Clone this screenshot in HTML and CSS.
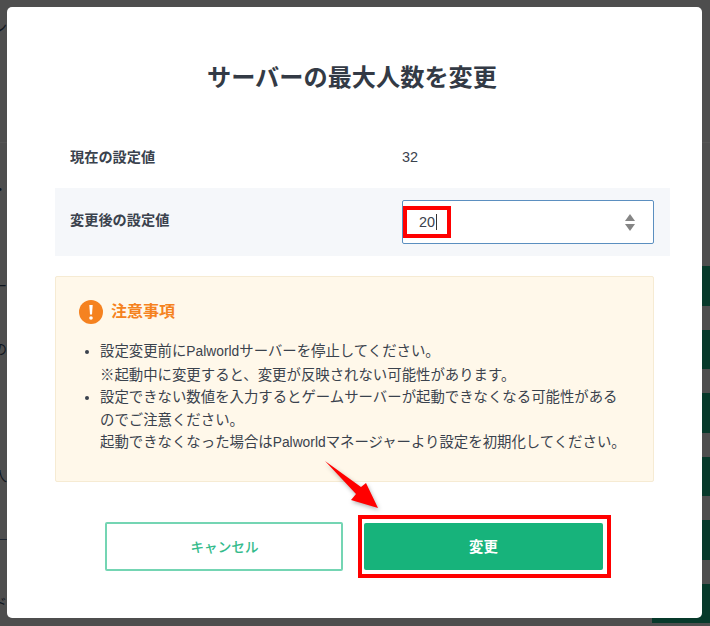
FILE: index.html
```html
<!DOCTYPE html>
<html lang="ja">
<head>
<meta charset="utf-8">
<title>サーバーの最大人数を変更</title>
<link rel="stylesheet" href="styles.css">
</head>
<body>
<div class="page">
  <div class="page-head"><span class="clip">ン</span></div>
  <div class="page-mid"><span class="clip">・</span></div>
  <div class="page-rows">
    <div class="bg-row"><span class="clip">ー</span><span class="bg-btn"></span></div>
    <div class="bg-row"><span class="clip">の</span><span class="bg-btn"></span></div>
    <div class="bg-row"><span class="clip"></span><span class="bg-btn"></span></div>
    <div class="bg-row"><span class="clip">人</span><span class="bg-btn"></span></div>
    <div class="bg-row bg-row-line"><span class="clip"></span><span class="bg-btn"></span></div>
    <div class="bg-row"><span class="clip">ド</span><span class="bg-btn"></span></div>
  </div>
</div>

<div class="modal">
  <h1 class="title">サーバーの最大人数を変更</h1>
  <div class="row row-plain">
    <div class="label">現在の設定値</div>
    <div class="value">32</div>
  </div>
  <div class="row row-shaded">
    <div class="label label-high">変更後の設定値</div>
    <div class="input">
      <span class="input-text">20</span><span class="caret"></span>
      <svg class="spin" viewBox="0 0 10 17" width="10" height="17" aria-hidden="true">
        <path d="M5 0 10 7H0Z" fill="#858585"/>
        <path d="M0 10H10L5 17Z" fill="#858585"/>
      </svg>
      <span class="mark-input"></span>
    </div>
  </div>
  <section class="notice">
    <div class="notice-head">
      <svg class="notice-icon" viewBox="0 0 24 24" width="24" height="24" aria-hidden="true">
        <circle cx="12" cy="12" r="12" fill="#f58220"/>
        <path d="M10.3 5H13.7L13 14.6H11Z" fill="#fff"/>
        <circle cx="12" cy="18" r="1.8" fill="#fff"/>
      </svg>
      <h2 class="notice-title">注意事項</h2>
    </div>
    <ul class="notice-list">
      <li>設定変更前に<span class="latin">Palworld</span>サーバーを停止してください。<br>※起動中に変更すると、変更が反映されない可能性があります。</li>
      <li>設定できない数値を入力するとゲームサーバーが起動できなくなる可能性があるのでご注意ください。<br>起動できなくなった場合は<span class="latin">Palworld</span>マネージャーより設定を初期化してください。</li>
    </ul>
  </section>
  <div class="actions">
    <button class="btn btn-cancel" type="button">キャンセル</button>
    <div class="confirm-wrap">
      <button class="btn btn-confirm" type="button">変更</button>
      <span class="mark-confirm"></span>
      <svg class="arrow" viewBox="0 0 60 54" width="60" height="54" aria-hidden="true">
        <path d="M1 1 37 27 42 23 54 48 27 40 32 34Z" fill="#ff0000"/>
      </svg>
    </div>
  </div>
</div>
</body>
</html>
```
FILE: styles.css
```css
* { box-sizing: border-box; }
html, body { margin: 0; height: 626px; overflow: hidden; }
body {
  position: relative;
  width: 710px;
  background: #4e4e4e;
  color: #3a424d;
  font-family: "Liberation Sans", "Noto Sans CJK JP", sans-serif;
  font-size: 14px;
}
.page { display: flex; flex-direction: column; height: 626px; }
.page-head { height: 143px; padding-top: 17px; border-bottom: 1px solid #555; }
.page-mid { height: 123px; padding-top: 36px; }
.page-rows { display: flex; flex-direction: column; gap: 24px; }
.bg-row { display: flex; justify-content: space-between; align-items: center; height: 39.5px; }
.bg-row-line .clip { height: 1px; background: #1d2530; }
.clip {
  display: flex;
  justify-content: flex-end;
  width: 7px;
  overflow: hidden;
  white-space: nowrap;
  color: #10161f;
  font-size: 14px;
  line-height: 20px;
}
.bg-btn { width: 58px; height: 39.5px; background: #07392a; }

.modal {
  position: absolute;
  left: 7px;
  top: 7px;
  width: 695px;
  height: 611px;
  padding: 0 32px 0 48px;
  background: #fff;
  border-radius: 5px;
}
.title {
  margin: 0;
  padding: 53px 21px 0 0;
  height: 118px;
  text-align: center;
  font-size: 24.2px;
  line-height: 36px;
  font-weight: 700;
  color: #333a45;
}
.row { display: grid; grid-template-columns: 332px 252px; padding-left: 15px; }
.row-plain { height: 63px; padding-top: 21px; }
.row-shaded { height: 68px; padding-top: 12px; background: #f5f7fa; }
.label { font-weight: 700; font-size: 14.2px; line-height: 22px; color: #3a424d; }
.label-high { padding-top: 9px; }
.value { font-size: 14.4px; line-height: 22px; color: #3a424d; }

.input {
  position: relative;
  display: flex;
  align-items: center;
  height: 44px;
  padding-left: 16px;
  padding-right: 18px;
  background: #fff;
  border: 1px solid #5b8fc0;
  border-radius: 2px;
}
.input-text { font-size: 14.4px; color: #3a424d; }
.caret { width: 1px; height: 16px; margin-left: 1px; background: #333; }
.spin { margin-left: auto; }
.mark-input {
  position: absolute;
  left: 0;
  top: 5px;
  width: 48px;
  height: 32px;
  border: 4px solid #ff0000;
}

.notice {
  width: 599px;
  height: 206px;
  margin-top: 20px;
  padding: 23px 21.5px 0 23px;
  background: #fff8ea;
  border: 1px solid #f6ebd3;
  border-radius: 2px;
}
.notice-head { display: flex; align-items: center; gap: 8px; height: 24px; }
.notice-icon { flex: none; }
.notice-title { margin: 0; font-size: 16px; line-height: 24px; font-weight: 700; color: #f58220; }
.notice-list {
  margin: 16px 0 0;
  padding: 0 0 0 21px;
  font-size: 14.4px;
  line-height: 22.5px;
  color: #3a424d;
}
.latin { font-size: 13.8px; }

.actions { display: flex; gap: 21px; margin-top: 40px; padding-left: 50px; }
.btn {
  display: block;
  font-family: inherit;
  font-size: 13.6px;
  font-weight: 700;
  border-radius: 2px;
  padding: 0 0 2px;
}
.btn-cancel {
  width: 238px;
  height: 49px;
  padding-left: 1px;
  background: #fff;
  border: 2px solid #74d5b3;
  color: #34bb8b;
  font-weight: 500;
}
.confirm-wrap { position: relative; padding-top: 1px; }
.btn-confirm {
  width: 239px;
  height: 47px;
  background: #17b37b;
  border: none;
  color: #fff;
  font-size: 14.4px;
}
.mark-confirm {
  position: absolute;
  left: -6px;
  top: -7px;
  width: 253px;
  height: 63px;
  border: 4px solid #ff0000;
}
.arrow {
  position: absolute;
  left: -40px;
  top: -62px;
  filter: drop-shadow(1px 2px 2px rgba(0,0,0,.3));
}
```
